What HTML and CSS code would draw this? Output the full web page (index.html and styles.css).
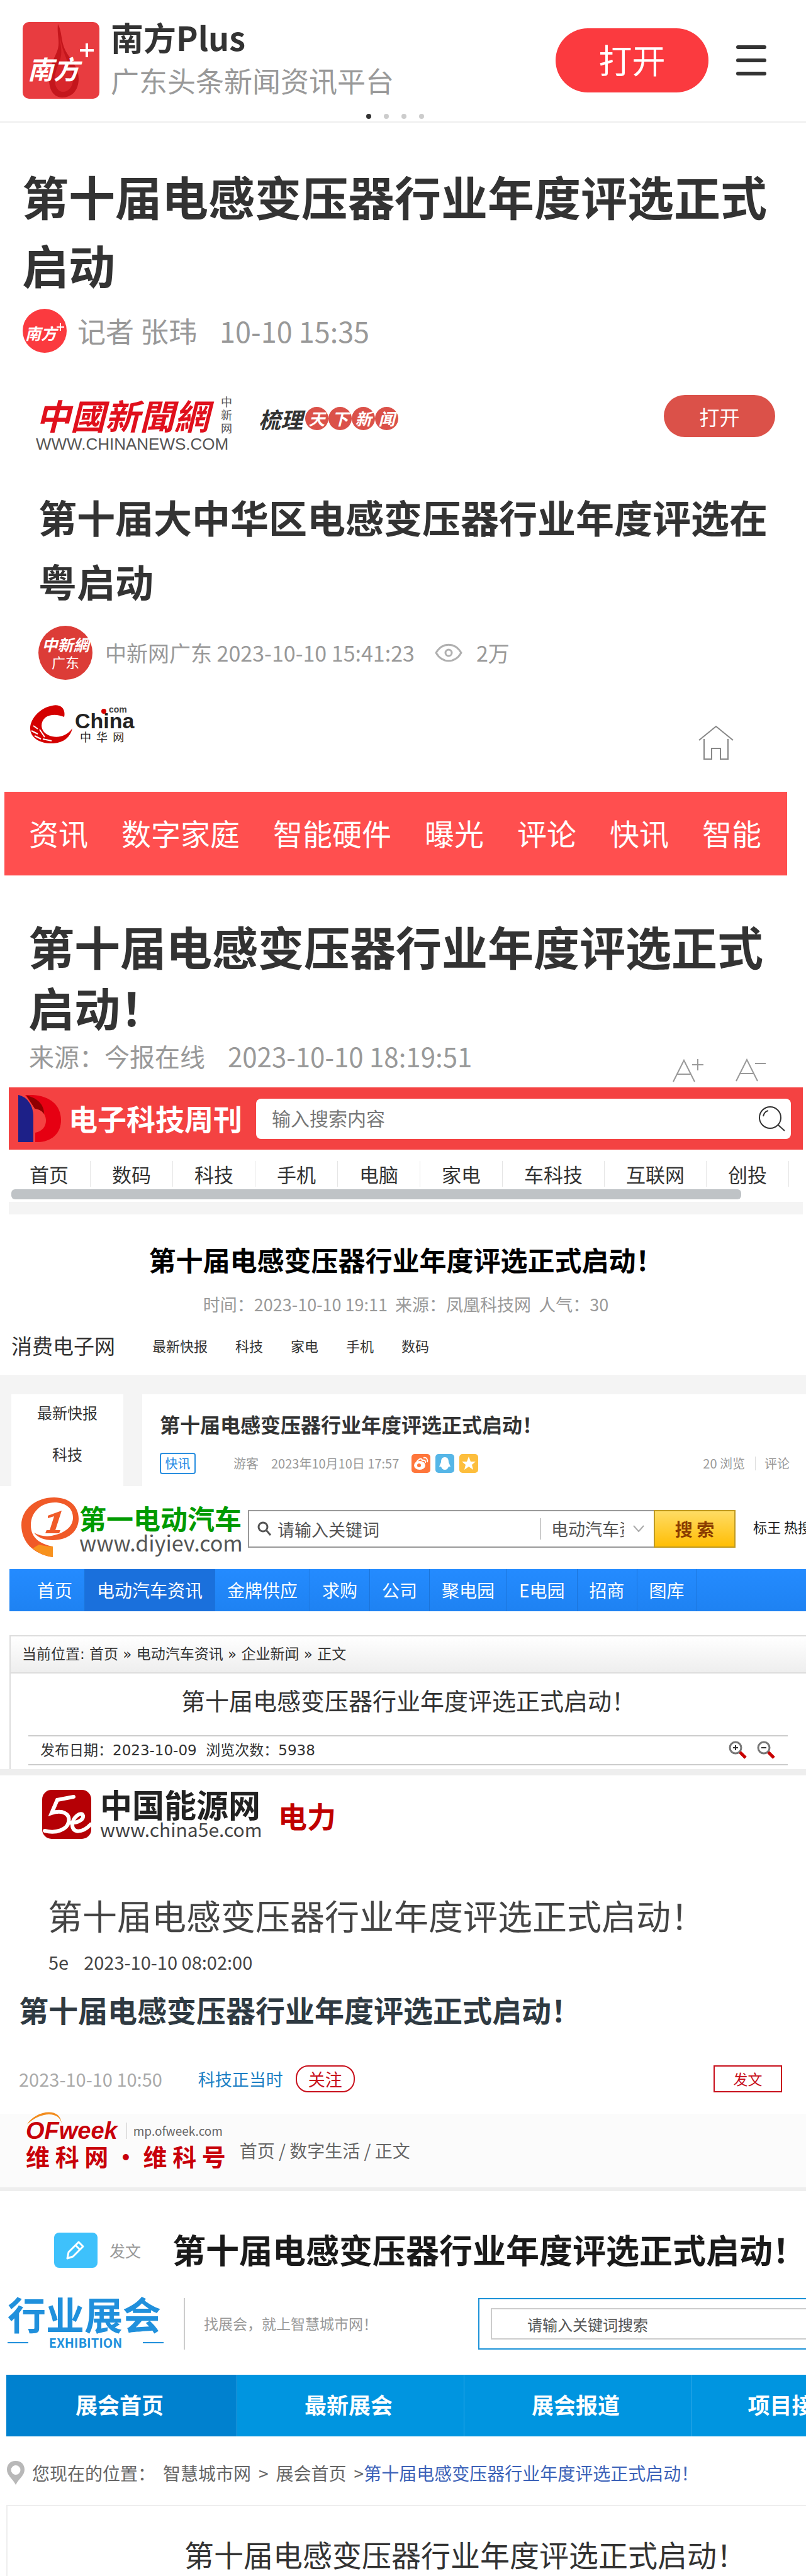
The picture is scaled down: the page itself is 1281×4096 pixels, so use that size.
FILE: index.html
```html
<!DOCTYPE html>
<html lang="zh-Hans">
<head>
  <meta charset="UTF-8">
  <meta name="viewport" content="width=device-width, initial-scale=1">
  <title>第十届电感变压器行业年度评选正式启动</title>
  <link rel="stylesheet" href="styles.css">
</head>
<body>

  <!-- 南方Plus -->
  <section class="nf">
    <header class="nf-header">
      <div class="nf-bar">
        <svg class="nf-logo" viewBox="0 0 122 122">
          <rect width="122" height="122" rx="10" fill="#e83c40"/>
          <path d="M56 3c-2 22 6 31-4 50-6 13-10 24-10 38 0 18 8 29 21 29 15 0 26-11 26-30 0-22-18-33-24-52-4-12-3-24-9-35z" fill="#c4161c"/>
          <path d="M59 20c1 20 5 26 0 42-5 12-8 20-8 30 0 12 6 19 13 19 9 0 16-8 16-20 0-18-17-36-21-71z" fill="#d8262b"/>
          <text x="8" y="91" class="nf-mark">南方</text>
          <path d="M91 45h22M102 34v22" stroke="#fff" stroke-width="4"/>
        </svg>
        <div class="nf-brand">
          <strong class="nf-name">南方Plus</strong>
          <span class="nf-slogan">广东头条新闻资讯平台</span>
        </div>
        <button class="nf-open">打开</button>
        <button class="nf-menu" aria-label="菜单"><i></i><i></i><i></i></button>
      </div>
      <div class="nf-dots"><i class="on"></i><i></i><i></i><i></i></div>
    </header>
    <h1 class="nf-title">第十届电感变压器行业年度评选正式启动</h1>
    <div class="nf-byline">
      <svg width="70" height="70" viewBox="0 0 70 70">
        <circle cx="35" cy="35" r="35" fill="#fb3a3f"/>
        <text x="4" y="49" class="nf-mark-small">南方</text>
        <path d="M54 29h12M60 23v12" stroke="#fff" stroke-width="2"/>
      </svg>
      <span>记者 张玮</span>
      <time>10-10 15:35</time>
    </div>
  </section>

  <!-- 中国新闻网 -->
  <section class="cns">
    <header class="cns-header">
      <a class="cns-logo" href="#">
        <span class="cns-words"><b>中國新聞網</b><small>中新网</small></span>
        <span class="cns-url">WWW.CHINANEWS.COM</span>
      </a>
      <div class="cns-slogan"><b>梳理</b><i>天</i><i>下</i><i>新</i><i>闻</i></div>
      <button class="cns-open">打开</button>
    </header>
    <h1 class="cns-title">第十届大中华区电感变压器行业年度评选在粤启动</h1>
    <div class="cns-byline">
      <span class="cns-avatar"><b>中新網</b><span>广东</span></span>
      <span>中新网广东 2023-10-10 15:41:23</span>
      <svg class="cns-eye" width="44" height="30" viewBox="0 0 44 30" fill="none" stroke="#b0b0b0" stroke-width="3">
        <path d="M2 15C12-2 32-2 42 15C32 32 12 32 2 15z"/>
        <circle cx="22" cy="15" r="5"/>
      </svg>
      <span>2万</span>
    </div>
  </section>

  <!-- 中华网 -->
  <section class="zh">
    <header class="zh-header">
      <svg width="176" height="64" viewBox="0 0 176 64">
        <path d="M55 20C58 6 48-1 36 2C15 6 1 24 1 38C1 54 18 63 38 62C54 61 65 52 68 38C59 51 43 55 30 49C17 43 16 29 25 21C33 15 46 16 55 20z" fill="#d40000"/>
        <path d="M6 34l7 5M3 42l10 5M8 50l10 5M16 40l8 12M21 55l14 3" stroke="#fff" stroke-width="2"/>
        <text x="72" y="38" class="zh-china">China</text>
        <circle cx="118" cy="11" r="4" fill="#d40000"/>
        <text x="126" y="13" class="zh-com">com</text>
        <text x="80" y="59" class="zh-cn">中&nbsp;&nbsp;华&nbsp;&nbsp;网</text>
      </svg>
      <a class="zh-home" href="#" aria-label="首页">
        <svg width="56" height="56" viewBox="0 0 56 56" fill="none" stroke="#888" stroke-width="2">
          <path d="M1 24L28 2L55 24M9 22v32h12V37h14v17h12V22"/>
        </svg>
      </a>
    </header>
    <nav class="zh-nav">
      <a href="#">资讯</a><a href="#">数字家庭</a><a href="#">智能硬件</a><a href="#">曝光</a><a href="#">评论</a><a href="#">快讯</a><a href="#">智能</a>
    </nav>
    <h1 class="zh-title">第十届电感变压器行业年度评选正式启动！</h1>
    <div class="zh-meta">
      <span>来源：今报在线</span>
      <time>2023-10-10 18:19:51</time>
      <svg width="148" height="38" viewBox="0 0 148 38" fill="none" stroke="#999" stroke-width="2">
        <path d="M1 37L18 3L35 37M7 25h22M31 10h18M40 1v18"/>
        <path d="M101 36L118 2L135 36M107 24h22M131 8h17"/>
      </svg>
    </div>
  </section>

  <!-- 电子科技周刊 -->
  <section class="dz">
    <header class="dz-header">
      <svg width="70" height="76" viewBox="0 0 70 76">
        <path d="M12 0C48-2 69 14 69 40C69 62 53 76 28 75V22z" fill="#e60012"/>
        <path d="M14 1C34 5 43 18 42 32C38 25 32 22 28 23z" fill="#8e0000"/>
        <path d="M28 22c12 2 17 10 17 19s-6 17-17 19z" fill="#f44242"/>
        <path d="M1 0C16 3 25 18 25 34V75H1z" fill="#1d2088"/>
      </svg>
      <strong>电子科技周刊</strong>
      <label class="dz-search">
        <input type="text" placeholder="输入搜索内容" aria-label="搜索内容">
        <svg width="44" height="42" viewBox="0 0 44 42" fill="none" stroke="#333" stroke-width="2">
          <circle cx="19" cy="19" r="17"/><path d="M8 17c1-5 4-8 8-9M32 31l10 9"/>
        </svg>
      </label>
    </header>
    <nav class="dz-nav">
      <a href="#">首页</a><a href="#">数码</a><a href="#">科技</a><a href="#">手机</a><a href="#">电脑</a><a href="#">家电</a><a href="#">车科技</a><a href="#">互联网</a><a href="#">创投</a>
    </nav>
    <div class="dz-scroll"></div>
    <div class="dz-band"></div>
    <h2 class="dz-title">第十届电感变压器行业年度评选正式启动！</h2>
    <p class="dz-meta">时间：2023-10-10 19:11 &nbsp;来源：凤凰科技网 &nbsp;人气：30</p>
  </section>

  <!-- 消费电子网 -->
  <section class="xf">
    <header class="xf-header">
      <strong>消费电子网</strong>
      <nav><a href="#">最新快报</a><a href="#">科技</a><a href="#">家电</a><a href="#">手机</a><a href="#">数码</a></nav>
    </header>
    <div class="xf-body">
      <nav class="xf-side"><a href="#">最新快报</a><a href="#">科技</a></nav>
      <article class="xf-card">
        <h2>第十届电感变压器行业年度评选正式启动！</h2>
        <div class="xf-meta">
          <a class="xf-tag" href="#">快讯</a>
          <span>游客</span>
          <time>2023年10月10日 17:57</time>
          <div class="xf-share">
            <svg viewBox="0 0 30 30"><rect width="30" height="30" rx="5" fill="#ff763b"/><ellipse cx="13" cy="18" rx="9" ry="7" fill="#fff"/><path d="M8 13c4-6 8-7 9-3 4-1 6 1 5 4M19 6c5-1 7 2 6 7" fill="none" stroke="#fff" stroke-width="2"/><circle cx="12" cy="18" r="3" fill="#ff763b"/></svg>
            <svg viewBox="0 0 30 30"><rect width="30" height="30" rx="5" fill="#56b6e7"/><path d="M15 5c-5 0-6 4-6 8l-3 7h3c1 3 3 5 6 5s5-2 6-5h3l-3-7c0-4-1-8-6-8z" fill="#fff"/></svg>
            <svg viewBox="0 0 30 30"><rect width="30" height="30" rx="5" fill="#fdbe3d"/><path d="M15 4l3 8 8 0-6 5 2 8-7-5-7 5 2-8-6-5 8 0z" fill="#fff"/></svg>
          </div>
          <span class="xf-count">20 浏览</span>
          <a class="xf-comment" href="#">评论</a>
        </div>
      </article>
    </div>
  </section>

  <!-- 第一电动汽车 -->
  <section class="ev">
    <header class="ev-header">
      <svg class="ev-mark" width="92" height="96" viewBox="0 0 92 96">
        <path d="M50 95C18 90 0 70 0 44C0 18 24 0 52 0C76 0 91 14 91 34C91 54 74 68 50 68C36 68 26 64 20 56C30 62 42 63 52 60C70 56 82 46 82 32C82 17 70 8 53 8C32 8 15 23 15 44C15 64 29 74 50 78z" fill="#f05a28"/>
        <path d="M50 95C37 93 26 88 18 81L28 75C35 77 43 78 50 78z" fill="#f7921e"/>
        <path d="M42 29l22-8L54 52h8l-2 5H38l2-5h5l7-22-10 3z" fill="#f05a28"/>
      </svg>
      <div class="ev-brand"><strong>第一电动汽车</strong><span>www.diyiev.com</span></div>
      <form class="ev-search">
        <svg width="24" height="24" viewBox="0 0 24 24" fill="none" stroke="#555" stroke-width="3"><circle cx="10" cy="9" r="7"/><path d="M15 14l7 8"/></svg>
        <input type="text" placeholder="请输入关键词" aria-label="关键词">
        <select aria-label="栏目"><option>电动汽车资讯</option></select>
        <svg class="ev-caret" width="18" height="12" viewBox="0 0 18 12" fill="none" stroke="#aaa" stroke-width="2"><path d="M1 1l8 9 8-9"/></svg>
        <button type="button">搜 索</button>
      </form>
      <div class="ev-hot"><a href="#">标王</a> 热搜</div>
    </header>
    <nav class="ev-nav">
      <a href="#">首页</a><a class="on" href="#">电动汽车资讯</a><a href="#">金牌供应</a><a href="#">求购</a><a href="#">公司</a><a href="#">聚电园</a><a href="#">E电园</a><a href="#">招商</a><a href="#">图库</a>
    </nav>
    <article class="ev-box">
      <div class="ev-crumb">当前位置: <a href="#">首页</a> » <a href="#">电动汽车资讯</a> » <a href="#">企业新闻</a> » 正文</div>
      <h2>第十届电感变压器行业年度评选正式启动！</h2>
      <div class="ev-meta">
        <span>发布日期：2023-10-09 &nbsp;浏览次数：5938</span>
        <svg width="74" height="30" viewBox="0 0 74 30" fill="none" stroke-width="3">
          <g stroke="#777"><circle cx="11" cy="11" r="9"/><circle cx="56" cy="11" r="9"/></g>
          <path d="M7 11h8M11 7v8M52 11h8" stroke="#333" stroke-width="2"/>
          <path d="M18 18l9 9M63 18l9 9" stroke="#c80000" stroke-width="5"/>
        </svg>
      </div>
    </article>
    <div class="ev-band"></div>
  </section>

  <!-- 中国能源网 -->
  <section class="ny">
    <header class="ny-header">
      <svg width="78" height="78" viewBox="0 0 78 78">
        <rect width="78" height="78" rx="15" fill="#b50005"/>
        <path d="M50 11L24 16L15 37C32 31 45 38 42 51C40 63 22 70 4 65M43 52C56 54 66 47 65 41C63 33 48 43 48 56C48 69 64 69 77 55" fill="none" stroke="#fff" stroke-width="6" stroke-linecap="round"/>
      </svg>
      <div class="ny-brand"><strong>中国能源网</strong><span>www.china5e.com</span></div>
      <strong class="ny-channel">电力</strong>
    </header>
    <h2>第十届电感变压器行业年度评选正式启动！</h2>
    <div class="ny-meta"><span>5e</span><time>2023-10-10 08:02:00</time></div>
  </section>

  <!-- 维科网 -->
  <section class="wk">
    <h2>第十届电感变压器行业年度评选正式启动！</h2>
    <div class="wk-meta">
      <time>2023-10-10 10:50</time>
      <a href="#">科技正当时</a>
      <button class="wk-follow">关注</button>
      <button class="wk-post">发文</button>
    </div>
    <footer class="wk-footer">
      <div class="wk-logo">
        <div class="wk-top">
          <svg class="wk-arc" width="58" height="20" viewBox="0 0 58 20"><path d="M0 20C12-1 53-10 55 19C52 0 24-2 0 20z" fill="#f28c1e"/></svg>
          <b>OFweek</b><span>mp.ofweek.com</span>
        </div>
        <strong>维 科 网 · 维 科 号</strong>
      </div>
      <div class="wk-crumb"><a href="#">首页</a> / <a href="#">数字生活</a> / 正文</div>
    </footer>
  </section>

  <!-- 行业展会 -->
  <section class="zl">
    <div class="zl-headline">
      <button class="zl-edit" aria-label="发文">
        <svg width="34" height="34" viewBox="0 0 34 34" fill="none" stroke="#fff" stroke-width="3" stroke-linejoin="round"><path d="M22 4l7 7-16 16-9 3 2-10zM17 9l7 7"/></svg>
      </button>
      <span>发文</span>
      <h2>第十届电感变压器行业年度评选正式启动！</h2>
    </div>
    <header class="zl-header">
      <div class="zl-logo"><strong>行业展会</strong><span>EXHIBITION</span></div>
      <p>找展会，就上智慧城市网！</p>
      <div class="zl-search"><input type="text" placeholder="请输入关键词搜索" aria-label="关键词搜索"></div>
    </header>
    <nav class="zl-nav">
      <a class="on" href="#">展会首页</a><a href="#">最新展会</a><a href="#">展会报道</a><a href="#">项目接洽会</a>
    </nav>
    <div class="zl-crumb">
      <svg width="28" height="38" viewBox="0 0 28 38"><path d="M14 0C5 0 0 6 0 14c0 9 9 14 14 24c5-10 14-15 14-24C28 6 23 0 14 0zm0 7a7 7 0 1 1 0 15a7 7 0 1 1 0-15z" fill="#b8b8b8" fill-rule="evenodd"/></svg>
      <span>您现在的位置：</span>
      <a href="#">智慧城市网</a><span>&gt;</span><a href="#">展会首页</a>
      <span>&gt;<a class="zl-current" href="#">第十届电感变压器行业年度评选正式启动！</a></span>
    </div>
    <article class="zl-box"><h2>第十届电感变压器行业年度评选正式启动！</h2></article>
  </section>

</body>
</html>
```
FILE: styles.css
```css
* {
  box-sizing: border-box;
}
body {
  margin: 0;
  background: #fff;
  color: #333;
  font-family: "Noto Sans CJK SC", "Noto Sans", sans-serif;
  overflow-x: hidden;
}
h1, h2, p {
  margin: 0;
}
a {
  color: inherit;
  text-decoration: none;
}
button, input, select {
  font-family: inherit;
  margin: 0;
  padding: 0;
  border: none;
}
button {
  cursor: pointer;
}
i {
  font-style: normal;
}
svg {
  display: block;
  flex: none;
}
section {
  white-space: nowrap;
}

/* 南方Plus */
.nf-header {
  padding: 33px 55px 4px 36px;
  border-bottom: 2px solid #eee;
}
.nf-bar {
  display: flex;
  align-items: center;
  padding-right: 8px;
}
.nf-logo {
  width: 122px;
  height: 122px;
}
.nf-mark {
  font-size: 41px;
  font-weight: bold;
  font-style: italic;
  fill: #fff;
}
.nf-mark-small {
  font-size: 25px;
  font-weight: bold;
  font-style: italic;
  fill: #fff;
}
.nf-brand {
  display: flex;
  flex-direction: column;
  gap: 20px;
  margin-left: 18px;
  padding-bottom: 8px;
}
.nf-name {
  font-size: 52px;
  line-height: 52px;
}
.nf-slogan {
  font-size: 45px;
  line-height: 46px;
  color: #999;
}
.nf-open {
  width: 243px;
  height: 102px;
  margin-left: auto;
  padding-bottom: 4px;
  border-radius: 51px;
  background: #fb3a3f;
  color: #fff;
  font-size: 53px;
}
.nf-menu {
  display: flex;
  flex-direction: column;
  gap: 15px;
  width: 48px;
  margin-left: 44px;
  background: none;
}
.nf-menu i {
  height: 6px;
  border-radius: 3px;
  background: #333;
}
.nf-dots {
  display: flex;
  justify-content: center;
  gap: 20px;
  margin-top: 22px;
  padding-right: 6px;
}
.nf-dots i {
  width: 8px;
  height: 8px;
  border-radius: 50%;
  background: #ccc;
}
.nf-dots .on {
  background: #333;
}
.nf-title {
  padding: 61px 30px 0 35px;
  font-size: 74px;
  line-height: 109px;
  white-space: normal;
}
.nf-byline {
  display: flex;
  align-items: center;
  margin-top: 17px;
  padding-left: 36px;
  font-size: 45px;
  line-height: 70px;
  color: #999;
}
.nf-byline span {
  margin: 0 36px 0 17px;
}

/* 中国新闻网 */
.cns {
  padding: 67px 43px 0 61px;
}
.cns-header {
  display: flex;
  align-items: flex-start;
  height: 90px;
  padding-right: 6px;
}
.cns-logo {
  width: 312px;
  margin-left: -4px;
}
.cns-words {
  display: flex;
  justify-content: space-between;
  align-items: center;
  height: 62px;
}
.cns-words b {
  font-family: "Noto Sans CJK TC", sans-serif;
  font-size: 55px;
  font-style: italic;
  line-height: 60px;
  color: #e0101c;
}
.cns-words small {
  width: 18px;
  font-size: 18px;
  line-height: 21px;
  color: #555;
  white-space: normal;
}
.cns-url {
  display: block;
  font-family: "Liberation Sans", sans-serif;
  font-size: 26px;
  line-height: 32px;
  color: #555;
}
.cns-slogan {
  display: flex;
  align-items: center;
  margin: 19px 0 0 42px;
  line-height: 36px;
}
.cns-slogan b {
  margin-right: 4px;
  font-size: 35px;
  font-style: italic;
}
.cns-slogan i {
  width: 37px;
  height: 37px;
  border-radius: 50%;
  background: #db5149;
  color: #fff;
  font-size: 26px;
  font-weight: bold;
  font-style: italic;
  line-height: 35px;
  text-align: center;
}
.cns-open {
  width: 177px;
  height: 67px;
  margin-left: auto;
  border-radius: 34px;
  background: #db5149;
  color: #fff;
  font-size: 32px;
}
.cns-title {
  padding-top: 53px;
  font-size: 61px;
  line-height: 102px;
  white-space: normal;
}
.cns-byline {
  display: flex;
  align-items: center;
  margin-top: 20px;
  font-size: 34px;
  line-height: 86px;
  color: #999;
}
.cns-avatar {
  display: flex;
  flex-direction: column;
  align-items: center;
  justify-content: center;
  width: 86px;
  height: 86px;
  margin-right: 20px;
  border-radius: 50%;
  background: #dc3c37;
  color: #fff;
  font-size: 22px;
  line-height: 28px;
}
.cns-avatar b {
  font-size: 25px;
  font-style: italic;
}
.cns-eye {
  margin: 0 22px 0 32px;
}

/* 中华网 */
.zh-header {
  display: flex;
  justify-content: space-between;
  align-items: flex-start;
  padding: 39px 115px 50px 47px;
}
.zh-china {
  font-family: "Liberation Sans", sans-serif;
  font-size: 34px;
  font-weight: bold;
  fill: #222;
}
.zh-com {
  font-family: "Liberation Sans", sans-serif;
  font-size: 14px;
  font-weight: bold;
  fill: #444;
}
.zh-cn {
  font-size: 18px;
  fill: #222;
}
.zh-home {
  margin-top: 33px;
}
.zh-nav {
  display: flex;
  gap: 53px;
  margin: 0 30px 0 7px;
  padding: 0 39px 4px;
  background: #ff4f4f;
  color: #fff;
  font-size: 47px;
  line-height: 129px;
}
.zh-title {
  padding: 63px 47px 0 45px;
  font-size: 73px;
  line-height: 97px;
  white-space: normal;
}
.zh-meta {
  display: flex;
  align-items: flex-start;
  height: 80px;
  padding: 1px 64px 0 46px;
  font-size: 40px;
  line-height: 58px;
  color: #999;
}
.zh-meta time {
  margin-left: 36px;
  font-size: 42px;
}
.zh-meta svg {
  margin: 33px 0 0 auto;
}

/* 电子科技周刊 */
.dz {
  padding: 0 5px 0 14px;
}
.dz-header {
  display: flex;
  align-items: center;
  height: 99px;
  padding: 0 19px 0 14px;
  background: #f44242;
}
.dz-header strong {
  margin: 0 22px 0 11px;
  padding-bottom: 4px;
  font-size: 46px;
  color: #fff;
}
.dz-search {
  display: flex;
  align-items: center;
  flex: 1;
  height: 64px;
  padding: 0 8px 0 25px;
  border-radius: 8px;
  background: #fff;
}
.dz-search input {
  flex: 1;
  padding-bottom: 4px;
  font-size: 30px;
  outline: none;
}
.dz-search input::placeholder {
  color: #777;
}
.dz-nav {
  display: flex;
  padding-top: 18px;
  font-size: 31px;
  line-height: 41px;
}
.dz-nav a {
  padding: 0 34px;
  border-right: 1px solid #e5e5e5;
}
.dz-nav a:first-child {
  padding-left: 33px;
}
.dz-scroll {
  height: 16px;
  margin: 4px 98px 4px 4px;
  border-radius: 6px;
  background: #bfc3c6;
}
.dz-band {
  height: 20px;
  background: #f4f4f4;
}
.dz-title {
  padding-top: 41px;
  color: #000;
  font-size: 43px;
  line-height: 60px;
  text-align: center;
}
.dz-meta {
  padding-top: 22px;
  color: #999;
  font-size: 27px;
  line-height: 40px;
  text-align: center;
}

/* 消费电子网 */
.xf-header {
  display: flex;
  align-items: center;
  height: 92px;
  padding: 0 0 3px 18px;
}
.xf-header strong {
  font-size: 33px;
  font-weight: normal;
}
.xf-header nav {
  display: flex;
  gap: 44px;
  margin-left: 59px;
  font-size: 22px;
}
.xf-body {
  display: grid;
  grid-template-columns: 178px 1fr;
  gap: 30px;
  padding: 31px 0 0 18px;
  background: #f4f4f4;
}
.xf-side {
  display: flex;
  flex-direction: column;
  gap: 8px;
  background: #fff;
  font-size: 24px;
  line-height: 58px;
  text-align: center;
}
.xf-card {
  padding: 22px 26px 19px 28px;
  background: #fff;
}
.xf-card h2 {
  font-size: 32px;
  line-height: 50px;
}
.xf-meta {
  display: flex;
  align-items: center;
  margin-top: 21px;
  font-size: 20px;
  line-height: 34px;
  color: #999;
}
.xf-tag {
  width: 57px;
  margin-right: 60px;
  border: 2px solid #2a8fe0;
  border-radius: 4px;
  color: #1e88e5;
  line-height: 30px;
  text-align: center;
}
.xf-meta time {
  margin: 0 20px;
}
.xf-share {
  display: flex;
  gap: 8px;
}
.xf-share svg {
  width: 30px;
  height: 30px;
}
.xf-count {
  margin-left: auto;
}
.xf-comment {
  margin-left: 16px;
  padding-left: 14px;
  border-left: 1px solid #ddd;
  line-height: 22px;
}

/* 第一电动汽车 */
.ev-header {
  display: flex;
  align-items: flex-start;
  height: 132px;
  padding: 18px 0 0 34px;
  overflow: hidden;
}
.ev-brand {
  display: flex;
  flex: none;
  flex-direction: column;
  width: 268px;
  padding-top: 9px;
}
.ev-brand strong {
  color: #009a00;
  font-size: 43px;
  line-height: 46px;
}
.ev-brand span {
  color: #555;
  font-size: 34px;
  line-height: 34px;
}
.ev-search {
  display: flex;
  flex: none;
  align-items: center;
  width: 775px;
  height: 60px;
  margin-top: 20px;
  padding-left: 12px;
  border: 2px solid #999;
  border-right: none;
}
.ev-search input {
  flex: 1;
  min-width: 0;
  margin-left: 9px;
  font-size: 27px;
  outline: none;
}
.ev-search input::placeholder {
  color: #555;
}
.ev-search select {
  width: 134px;
  height: 34px;
  padding-left: 16px;
  border-left: 2px solid #ccc;
  background: none;
  color: #555;
  font-size: 27px;
  line-height: 34px;
  appearance: none;
}
.ev-caret {
  margin: 0 15px 0 14px;
}
.ev-search button {
  flex: none;
  width: 130px;
  height: 60px;
  border: 2px solid #c09a20;
  background: linear-gradient(#ffdc64, #ffbe05);
  color: #8a3c00;
  font-size: 28px;
  font-weight: bold;
}
.ev-hot {
  margin: 28px 0 0 28px;
  font-size: 22px;
  line-height: 36px;
  color: #222;
}
.ev-nav {
  display: flex;
  margin-left: 15px;
  padding-left: 25px;
  background: linear-gradient(#248bff, #1e82f2);
  color: #fff;
  font-size: 28px;
  line-height: 67px;
}
.ev-nav a {
  padding: 0 19px;
  border-right: 1px solid #1b74da;
}
.ev-nav .on {
  background: #1a70dc;
}
.ev-box {
  margin: 38px 0 0 15px;
  padding-bottom: 6px;
  border-top: 2px solid #ddd;
  border-left: 2px solid #ddd;
}
.ev-crumb {
  padding-left: 18px;
  border-bottom: 2px solid #ddd;
  background: linear-gradient(#fff, #eee);
  font-family: "DejaVu Sans", "Noto Sans CJK SC", sans-serif;
  font-size: 23px;
  line-height: 57px;
}
.ev-box h2 {
  padding-top: 12px;
  font-size: 38px;
  font-weight: normal;
  line-height: 60px;
  text-align: center;
}
.ev-meta {
  display: flex;
  justify-content: space-between;
  align-items: center;
  margin: 26px 29px 0 28px;
  padding: 0 20px 0 19px;
  border-top: 2px solid #ccc;
  border-bottom: 2px solid #ccc;
  font-family: "DejaVu Sans", "Noto Sans CJK SC", sans-serif;
  font-size: 23px;
  line-height: 44px;
}
.ev-band {
  height: 10px;
  background: #eee;
}

/* 中国能源网 */
.ny-header {
  display: flex;
  padding: 23px 0 0 67px;
}
.ny-brand {
  display: flex;
  flex-direction: column;
  justify-content: space-between;
  width: 283px;
  margin: -2px 0 0 14px;
}
.ny-brand strong {
  font-size: 51px;
  line-height: 48px;
  color: #222;
}
.ny-brand span {
  font-size: 30px;
  line-height: 32px;
  color: #444;
}
.ny-channel {
  padding-top: 10px;
  color: #c00000;
  font-size: 46px;
  line-height: 60px;
}
.ny h2 {
  padding: 80px 0 0 76px;
  color: #444;
  font-size: 55px;
  font-weight: normal;
  line-height: 80px;
}
.ny-meta {
  display: flex;
  gap: 24px;
  padding: 15px 0 0 77px;
  color: #444;
  font-size: 29px;
  line-height: 40px;
}

/* 维科网 */
.wk h2 {
  padding: 26px 0 0 30px;
  color: #2f3a42;
  font-size: 47px;
  line-height: 60px;
}
.wk-meta {
  display: flex;
  align-items: center;
  padding: 59px 38px 34px 30px;
  color: #aaa;
  font-size: 29px;
  line-height: 43px;
}
.wk-meta a {
  margin: 0 20px 0 57px;
  color: #1c7fc4;
  font-size: 27px;
}
.wk-meta button {
  height: 43px;
  border: 2px solid #c8101c;
  background: #fff;
  color: #c8101c;
  line-height: 37px;
}
.wk-meta .wk-follow {
  width: 94px;
  border-radius: 20px;
  font-size: 27px;
}
.wk-meta .wk-post {
  width: 109px;
  margin-left: auto;
  font-size: 23px;
}
.wk-footer {
  display: flex;
  align-items: flex-start;
  height: 123px;
  padding: 9px 0 0 41px;
  border-bottom: 6px solid #eee;
  background: #fbfbfb;
}
.wk-top {
  position: relative;
  display: flex;
  align-items: center;
  height: 36px;
}
.wk-arc {
  position: absolute;
  left: 2px;
  top: -12px;
}
.wk-top b {
  font-family: "Liberation Sans", sans-serif;
  font-size: 38px;
  font-style: italic;
  line-height: 36px;
  color: #c8000a;
}
.wk-top span {
  margin-left: 14px;
  padding-left: 10px;
  border-left: 1px solid #ccc;
  color: #666;
  font-size: 19px;
  line-height: 26px;
}
.wk-logo strong {
  display: block;
  margin-top: 2px;
  color: #c8000a;
  font-size: 38px;
  line-height: 40px;
}
.wk-crumb {
  margin: 29px 0 0 22px;
  color: #666;
  font-size: 28px;
  line-height: 40px;
}

/* 行业展会 */
.zl-headline {
  display: flex;
  align-items: center;
  height: 56px;
  margin: 66px 0 0 86px;
}
.zl-edit {
  display: flex;
  align-items: center;
  justify-content: center;
  width: 74px;
  height: 56px;
  border-radius: 8px;
  background: #3ec1fb;
}
.zl-headline span {
  margin: 0 50px 0 19px;
  color: #999;
  font-size: 25px;
}
.zl-headline h2 {
  padding-bottom: 4px;
  color: #1a1a1a;
  font-size: 53px;
  line-height: 60px;
}
.zl-header {
  display: flex;
  height: 82px;
  margin-top: 48px;
  padding-left: 12px;
}
.zl-logo {
  width: 248px;
  color: #2090dc;
}
.zl-logo strong {
  display: block;
  font-size: 61px;
  line-height: 50px;
}
.zl-logo span {
  display: flex;
  justify-content: space-between;
  align-items: center;
  margin-top: 11px;
  font-size: 20px;
  font-weight: bold;
  line-height: 20px;
}
.zl-logo span::before,
.zl-logo span::after {
  content: "";
  width: 33px;
  height: 2px;
  background: #2090dc;
}
.zl-header p {
  flex: 1;
  margin-left: 32px;
  padding-left: 30px;
  border-left: 2px solid #ccc;
  color: #999;
  font-size: 23px;
  line-height: 80px;
}
.zl-search {
  width: 521px;
  padding: 14px 0 14px 18px;
  border: 2px solid #1c92d8;
  border-right: none;
}
.zl-search input {
  width: 100%;
  height: 50px;
  padding-left: 56px;
  border: 2px solid #ccc;
  border-right: none;
  font-size: 24px;
}
.zl-search input::placeholder {
  color: #555;
}
.zl-nav {
  display: flex;
  margin: 40px 0 0 10px;
  background: #0095e0;
  color: #fff;
  font-size: 35px;
  font-weight: bold;
  line-height: 94px;
  overflow: hidden;
}
.zl-nav a {
  flex: none;
  width: 361px;
  padding: 0 6px 4px 0;
  border-left: 1px solid #33aae8;
  text-align: center;
}
.zl-nav .on {
  width: 366px;
  border-left: none;
  background: #0081cf;
}
.zl-crumb {
  display: flex;
  align-items: center;
  gap: 12px;
  padding: 38px 0 31px 11px;
  color: #666;
  font-size: 28px;
  line-height: 40px;
}
.zl-current {
  color: #3c62b8;
}
.zl-box {
  margin-left: 10px;
  padding: 46px 0 8px;
  border-top: 2px solid #eee;
  border-left: 2px solid #eee;
}
.zl-box h2 {
  padding-left: 281px;
  font-size: 47px;
  font-weight: normal;
  line-height: 60px;
}
```
